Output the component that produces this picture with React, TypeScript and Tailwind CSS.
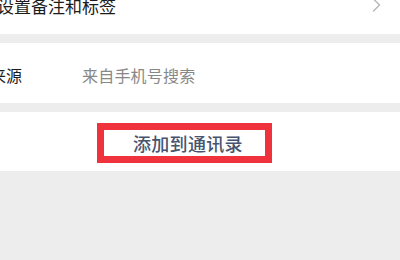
import React from 'react';

const ChevronRight = () => (
  <svg className="w-[9px] h-[14px]" viewBox="0 0 9 14" fill="none">
    <path d="M1.5 1l6 6-6 6" stroke="#b5b5b5" strokeWidth="1.3" strokeLinecap="round" strokeLinejoin="round" />
  </svg>
);

export default function App() {
  return (
    <div
      className="w-[400px] h-[260px] overflow-hidden bg-[#ededed] flex flex-col"
      style={{ fontFamily: '"Noto Sans CJK SC", "Noto Sans", sans-serif' }}
    >
      {/* remark & tag row (cut off at top) */}
      <div className="h-[34px] bg-white flex items-start justify-between pr-[19px] shrink-0">
        <span className="-ml-[3px] -mt-[3px] text-[17px] leading-[17px] text-[#1c1c1c]">设置备注和标签</span>
        <span className="-mt-[2px]">
          <ChevronRight />
        </span>
      </div>

      <div className="h-[9px] shrink-0" />

      {/* source row */}
      <div className="h-[60px] bg-white flex items-center shrink-0 pt-[3px]">
        <span className="-ml-[10px] w-[92px] text-[16px] leading-[16px] text-[#1c1c1c]">来源</span>
        <span className="text-[16px] tracking-[0.2px] leading-[16px] text-[#888888]">来自手机号搜索</span>
      </div>

      <div className="h-[9px] shrink-0" />

      {/* add to contacts */}
      <div className="h-[59px] bg-white shrink-0 pt-[11px] pl-[97px]">
        <div className="w-[175px] h-[40px] border-[7px] border-[#f0323c] flex items-center pl-[29px]">
          <span className="text-[18px] tracking-[0.3px] leading-[18px] font-medium text-[#46546f]">添加到通讯录</span>
        </div>
      </div>
    </div>
  );
}
